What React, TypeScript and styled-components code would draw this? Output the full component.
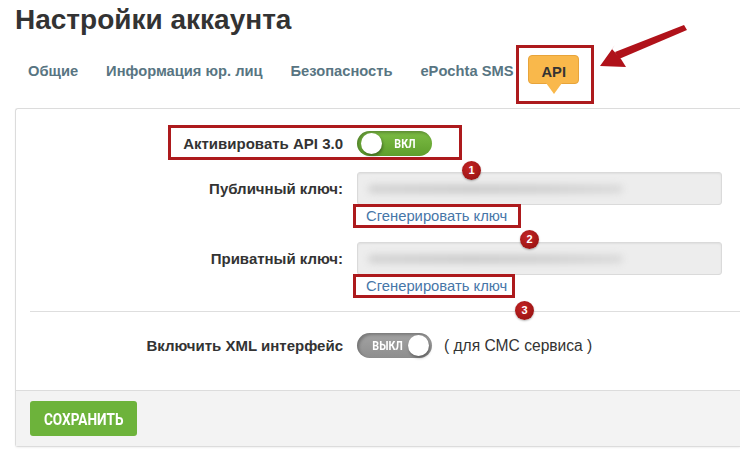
import React from 'react';
import styled, { createGlobalStyle } from 'styled-components';

const GlobalStyle = createGlobalStyle`
  html, body {
    margin: 0;
    padding: 0;
    background: #fff;
    overflow: hidden;
  }
  body {
    font-family: "Liberation Sans", Arial, sans-serif;
    color: #333;
  }
`;

const annotation = '#ad1a1d';

const Page = styled.div`
  position: relative;
  width: 740px;
  height: 461px;
  padding-left: 15px;
  box-sizing: border-box;
`;

const Title = styled.h1`
  margin: 4px 0 0;
  font-size: 28px;
  line-height: 32px;
  font-weight: 700;
  color: #333;
`;

const TabBar = styled.nav`
  display: flex;
  align-items: flex-start;
  height: 40px;
  margin: 19px 0 13px -1px;
`;

const Tab = styled.a`
  position: relative;
  display: block;
  height: 29px;
  box-sizing: border-box;
  padding: 4px 14px 0;
  line-height: 25px;
  font-size: 14.7px;
  font-weight: 700;
  color: #587582;
  text-decoration: none;
  white-space: nowrap;
`;

const ActiveTab = styled(Tab)`
  margin-left: 1px;
  padding: 4px 12px 0;
  color: #333;
  background: #f9b84b;
  border: 1px solid #e8a43a;
  border-radius: 4px;
  &::after {
    content: '';
    position: absolute;
    left: 50%;
    bottom: -11px;
    margin-left: -8px;
    border-style: solid;
    border-width: 11px 8px 0;
    border-color: #f9b84b transparent transparent;
  }
`;

const TabWrap = styled.div`
  position: relative;
`;

const TabFrame = styled.span`
  position: absolute;
  left: -11px;
  top: -10px;
  width: 78px;
  height: 59px;
  border: 3px solid ${annotation};
  box-sizing: border-box;
  pointer-events: none;
`;

const Arrow = styled.svg`
  position: absolute;
  left: 595px;
  top: 16px;
`;

const Panel = styled.section`
  border: 1px solid #dcdcdc;
  border-right: 0;
  border-radius: 3px 0 0 3px;
  box-shadow: 0 1px 2px rgba(0, 0, 0, 0.06);
`;

const Body = styled.div`
  padding: 22px 0 32px;
`;

const Row = styled.div<{ $gap?: number }>`
  position: relative;
  display: grid;
  grid-template-columns: 327px 365px;
  column-gap: 14px;
  align-items: center;
  margin-top: ${(p) => p.$gap ?? 0}px;
`;

const Label = styled.label`
  text-align: right;
  font-size: 15px;
  font-weight: 700;
  color: #333;
  white-space: nowrap;
`;

const Cell = styled.div`
  position: relative;
  display: flex;
  align-items: center;
  gap: 12px;
`;

const Switch = styled.span<{ $on: boolean }>`
  position: relative;
  display: flex;
  flex: none;
  align-items: center;
  justify-content: ${(p) => (p.$on ? 'flex-end' : 'flex-start')};
  width: 75px;
  height: 25px;
  box-sizing: border-box;
  padding: ${(p) => (p.$on ? '0 14px 0 0' : '0 0 0 12px')};
  border-radius: 13px;
  background: ${(p) =>
    p.$on
      ? 'linear-gradient(#7dbd45, #5f9f2c)'
      : 'linear-gradient(#a3a3a3, #8e8e8e)'};
  box-shadow: inset 2px 2px 3px rgba(0, 0, 0, 0.25);
  &::before {
    content: '';
    position: absolute;
    top: 2px;
    ${(p) => (p.$on ? 'left: 4px;' : 'right: 3px;')}
    width: 21px;
    height: 21px;
    border-radius: 50%;
    background: #fff;
    box-shadow: 1px 2px 3px rgba(0, 0, 0, 0.35);
  }
`;

const SwitchText = styled.span`
  display: inline-block;
  font-family: Roboto, "Liberation Sans", sans-serif;
  font-size: 13px;
  font-weight: 700;
  color: #fff;
  transform: scaleX(0.82);
`;

const Hint = styled.span`
  font-size: 15.6px;
  color: #333;
  white-space: nowrap;
`;

const KeyInput = styled.div`
  display: flex;
  align-items: center;
  height: 33px;
  box-sizing: border-box;
  padding: 0 10px;
  background: #ededed;
  border: 1px solid #dadada;
  border-radius: 3px;
  box-shadow: inset 0 1px 2px rgba(0, 0, 0, 0.06);
`;

const Blurred = styled.span<{ $w: number }>`
  display: block;
  width: ${(p) => p.$w}px;
  height: 10px;
  border-radius: 5px;
  background: linear-gradient(90deg, #d6d6d6, #cfcfcf 40%, #d3d3d3 70%, #dcdcdc);
  filter: blur(3px);
`;

const LinkLine = styled.div`
  position: relative;
  height: 22px;
  line-height: 22px;
  padding-left: 9px;
`;

const GenLink = styled.a`
  font-size: 14.8px;
  color: #4676a8;
  text-decoration: none;
`;

const Frame = styled.span<{ $l: number; $t: number; $w: number; $h: number }>`
  position: absolute;
  z-index: 2;
  left: ${(p) => p.$l}px;
  top: ${(p) => p.$t}px;
  width: ${(p) => p.$w}px;
  height: ${(p) => p.$h}px;
  border: 3px solid ${annotation};
  box-sizing: border-box;
  pointer-events: none;
`;

const Badge = styled.span<{ $l: number; $t: number }>`
  position: absolute;
  z-index: 3;
  left: ${(p) => p.$l}px;
  top: ${(p) => p.$t}px;
  width: 19px;
  height: 19px;
  border-radius: 50%;
  background: radial-gradient(circle at 40% 35%, #c42424, #8e0f0f);
  box-shadow: 0 1px 2px rgba(0, 0, 0, 0.3);
  color: #fff;
  font-size: 11px;
  font-weight: 700;
  line-height: 19px;
  text-align: center;
`;

const Divider = styled.hr`
  margin: 14px 0 0 14px;
  border: 0;
  border-top: 1px solid #dedede;
`;

const Footer = styled.footer`
  padding: 10px 14px 10px;
  background: #f3f3f3;
  border-top: 1px solid #dcdcdc;
`;

const SaveButton = styled.button`
  display: flex;
  align-items: center;
  justify-content: center;
  width: 107px;
  height: 35px;
  border: 0;
  border-radius: 3px;
  background: #6db33b;
  color: #fff;
  cursor: pointer;
`;

const ButtonText = styled.span`
  display: inline-block;
  font-family: Roboto, "Liberation Sans", sans-serif;
  font-size: 17px;
  font-weight: 700;
  transform: scaleX(0.8);
  white-space: nowrap;
`;

export default function App() {
  return (
    <Page>
      <GlobalStyle />
      <Title>Настройки аккаунта</Title>

      <TabBar>
        <Tab>Общие</Tab>
        <Tab>Информация юр. лиц</Tab>
        <Tab>Безопасность</Tab>
        <Tab>ePochta SMS</Tab>
        <TabWrap>
          <ActiveTab>API</ActiveTab>
          <TabFrame />
        </TabWrap>
      </TabBar>

      <Arrow width="95" height="52" viewBox="0 0 95 52">
        <polygon points="89,5 92,10 24,39 20,32" fill="#b0121a" />
        <polygon points="5,46 31,47 26,39 17,29 20,25" fill="#b0121a" />
      </Arrow>

      <Panel>
        <Body>
          <Row>
            <Label>Активировать API 3.0</Label>
            <Cell>
              <Switch $on>
                <SwitchText>ВКЛ</SwitchText>
              </Switch>
            </Cell>
            <Frame $l={152} $t={-6} $w={294} $h={35} />
            <Badge $l={446} $t={30}>1</Badge>
          </Row>

          <Row $gap={16}>
            <Label>Публичный ключ:</Label>
            <KeyInput>
              <Blurred $w={255} />
            </KeyInput>
          </Row>
          <Row>
            <span />
            <LinkLine>
              <GenLink href="#">Сгенерировать ключ</GenLink>
              <Frame $l={-4} $t={-1} $w={168} $h={24} />
              <Badge $l={163} $t={25}>2</Badge>
            </LinkLine>
          </Row>

          <Row $gap={15}>
            <Label>Приватный ключ:</Label>
            <KeyInput>
              <Blurred $w={255} />
            </KeyInput>
          </Row>
          <Row>
            <span />
            <LinkLine>
              <GenLink href="#">Сгенерировать ключ</GenLink>
              <Frame $l={-4} $t={-1} $w={162} $h={24} />
              <Badge $l={158} $t={26}>3</Badge>
            </LinkLine>
          </Row>

          <Divider />

          <Row $gap={21}>
            <Label>Включить XML интерфейс</Label>
            <Cell>
              <Switch $on={false}>
                <SwitchText>ВЫКЛ</SwitchText>
              </Switch>
              <Hint>( для СМС сервиса )</Hint>
            </Cell>
          </Row>
        </Body>
        <Footer>
          <SaveButton>
            <ButtonText>СОХРАНИТЬ</ButtonText>
          </SaveButton>
        </Footer>
      </Panel>
    </Page>
  );
}
